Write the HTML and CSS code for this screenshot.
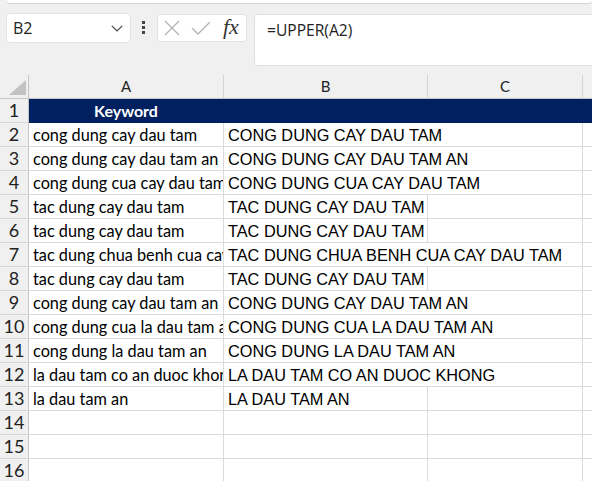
FILE: index.html
```html
<!DOCTYPE html>
<html>
<head>
<meta charset="utf-8">
<link rel="stylesheet" href="styles.css">
</head>
<body>
<div class="app">
  <div class="ribbon-edge"></div>
  <div class="formula-row">
    <div class="namebox">
      <span class="ref">B2</span>
      <svg class="chev" width="12" height="7" viewBox="0 0 12 7"><path d="M0.8 0.8 L6 6 L11.2 0.8" fill="none" stroke="#444" stroke-width="1.2"/></svg>
    </div>
    <div class="grip"><i></i><i></i><i></i></div>
    <div class="fbtns">
      <svg width="16" height="16" viewBox="0 0 16 16"><path d="M1 1 L15 15 M15 1 L1 15" stroke="#b4b4b4" stroke-width="1.4" fill="none"/></svg>
      <svg width="20" height="14" viewBox="0 0 20 14"><path d="M1 7 L7 13 L19 1" stroke="#b4b4b4" stroke-width="1.4" fill="none"/></svg>
      <span class="fx">fx</span>
    </div>
    <div class="fbar">=UPPER(A2)</div>
  </div>
  <div class="sheet">
    <div class="row colhdr">
      <div class="corner"><span class="tri"></span></div>
      <div class="ch">A</div>
      <div class="ch">B</div>
      <div class="ch">C</div>
      <div class="ch last"></div>
    </div>
    <div class="row head">
      <div class="rh">1</div>
      <div class="c a key">Keyword</div>
      <div class="c nv"></div>
      <div class="c nv"></div>
      <div class="c nv last"></div>
    </div>
    <div class="row">
      <div class="rh">2</div>
      <div class="c a">cong dung cay dau tam</div>
      <div class="c b span">CONG DUNG CAY DAU TAM</div>
      <div class="c last"></div>
    </div>
    <div class="row">
      <div class="rh">3</div>
      <div class="c a">cong dung cay dau tam an</div>
      <div class="c b span">CONG DUNG CAY DAU TAM AN</div>
      <div class="c last"></div>
    </div>
    <div class="row">
      <div class="rh">4</div>
      <div class="c a">cong dung cua cay dau tam</div>
      <div class="c b span">CONG DUNG CUA CAY DAU TAM</div>
      <div class="c last"></div>
    </div>
    <div class="row">
      <div class="rh">5</div>
      <div class="c a">tac dung cay dau tam</div>
      <div class="c b">TAC DUNG CAY DAU TAM</div>
      <div class="c"></div>
      <div class="c last"></div>
    </div>
    <div class="row">
      <div class="rh">6</div>
      <div class="c a">tac dung cay dau tam</div>
      <div class="c b">TAC DUNG CAY DAU TAM</div>
      <div class="c"></div>
      <div class="c last"></div>
    </div>
    <div class="row">
      <div class="rh">7</div>
      <div class="c a">tac dung chua benh cua cay dau tam</div>
      <div class="c b span">TAC DUNG CHUA BENH CUA CAY DAU TAM</div>
      <div class="c last"></div>
    </div>
    <div class="row">
      <div class="rh">8</div>
      <div class="c a">tac dung cay dau tam</div>
      <div class="c b">TAC DUNG CAY DAU TAM</div>
      <div class="c"></div>
      <div class="c last"></div>
    </div>
    <div class="row">
      <div class="rh">9</div>
      <div class="c a">cong dung cay dau tam an</div>
      <div class="c b span">CONG DUNG CAY DAU TAM AN</div>
      <div class="c last"></div>
    </div>
    <div class="row">
      <div class="rh">10</div>
      <div class="c a">cong dung cua la dau tam an</div>
      <div class="c b span">CONG DUNG CUA LA DAU TAM AN</div>
      <div class="c last"></div>
    </div>
    <div class="row">
      <div class="rh">11</div>
      <div class="c a">cong dung la dau tam an</div>
      <div class="c b span">CONG DUNG LA DAU TAM AN</div>
      <div class="c last"></div>
    </div>
    <div class="row">
      <div class="rh">12</div>
      <div class="c a">la dau tam co an duoc khong</div>
      <div class="c b span">LA DAU TAM CO AN DUOC KHONG</div>
      <div class="c last"></div>
    </div>
    <div class="row">
      <div class="rh">13</div>
      <div class="c a">la dau tam an</div>
      <div class="c b">LA DAU TAM AN</div>
      <div class="c"></div>
      <div class="c last"></div>
    </div>
    <div class="row">
      <div class="rh">14</div>
      <div class="c a"></div>
      <div class="c b"></div>
      <div class="c"></div>
      <div class="c last"></div>
    </div>
    <div class="row">
      <div class="rh">15</div>
      <div class="c a"></div>
      <div class="c b"></div>
      <div class="c"></div>
      <div class="c last"></div>
    </div>
    <div class="row">
      <div class="rh">16</div>
      <div class="c a"></div>
      <div class="c b"></div>
      <div class="c"></div>
      <div class="c last"></div>
    </div>
  </div>
</div>
</body>
</html>
```

FILE: styles.css
```css
* { box-sizing: border-box; }
html, body { margin: 0; padding: 0; }
body {
  width: 592px;
  height: 481px;
  overflow: hidden;
  background: #f0f0f0;
  font-family: "Open Sans", "Noto Sans", sans-serif;
}
.app { width: 592px; height: 481px; overflow: hidden; }

.ribbon-edge {
  height: 3px;
  margin-left: 7px;
  background: #fff;
  border-radius: 0 0 6px 6px;
  box-shadow: 0 1px 1px rgba(0,0,0,0.12);
}

.formula-row {
  height: 72px;
  display: flex;
  align-items: flex-start;
  padding-top: 10px;
  padding-left: 6px;
}
.namebox {
  width: 125px;
  height: 30px;
  background: #fff;
  border: 1px solid #e3e3e3;
  border-radius: 4px;
  display: flex;
  align-items: center;
  justify-content: space-between;
  padding: 0 6px 0 6px;
}
.ref { font-size: 16px; color: #222; }
.chev { margin-right: 1px; margin-top: 1px; }

.grip {
  width: 4px;
  margin: 8px 11px 0 11px;
  display: flex;
  flex-direction: column;
  gap: 2px;
}
.grip i { display: block; width: 3px; height: 3px; background: #444; }

.fbtns {
  width: 90px;
  height: 28px;
  margin-top: 1px;
  background: #fff;
  border: 1px solid #e3e3e3;
  border-radius: 4px;
  display: flex;
  align-items: center;
  padding-left: 6px;
  gap: 11px;
}
.fx {
  font-family: "Liberation Serif", serif;
  font-style: italic;
  font-size: 22px;
  color: #333;
  margin-left: 1px;
  margin-top: -2px;
}

.fbar {
  flex: 1;
  height: 52px;
  margin-top: 1px;
  margin-left: 7px;
  margin-right: -6px;
  background: #fff;
  border: 1px solid #e0e0e0;
  border-radius: 4px;
  font-size: 15.6px;
  color: #222;
  padding: 4px 0 0 12px;
}

.sheet { background: #fff; }
.row {
  display: grid;
  grid-template-columns: 29px 195px 204px 155px 1fr;
  height: 24px;
}
.rh, .ch, .corner {
  background: #f0f0f0;
  border-right: 1px solid #c6c6c6;
  border-bottom: 1px solid #d6d6d6;
  color: #222;
  font-family: "Lato", "Open Sans", sans-serif;
}
.rh {
  font-size: 18px;
  line-height: 23px;
  text-align: center;
}
.ch {
  font-size: 15px;
  line-height: 23px;
  text-align: center;
  border-right-color: #d4d4d4;
  border-bottom-color: #c6c6c6;
}
.ch.last { border-right: none; }
.corner {
  position: relative;
  border-bottom-color: #c6c6c6;
}
.tri {
  position: absolute;
  left: 9px;
  top: 5px;
  width: 0;
  height: 0;
  border-left: 17px solid transparent;
  border-bottom: 15px solid #c2c2c2;
}

.c {
  border-right: 1px solid #dadada;
  border-bottom: 1px solid #dadada;
  white-space: nowrap;
  overflow: hidden;
  line-height: 23px;
  padding-left: 4px;
  color: #000;
}
.c.last { border-right: none; }
.a {
  font-family: "Lato", "Open Sans", sans-serif;
  font-size: 16.3px;
  padding-top: 1px;
  line-height: 22px;
}
.b {
  font-family: "Liberation Sans", Arial, sans-serif;
  font-size: 16.3px;
  padding-top: 1px;
  line-height: 22px;
}
.span { grid-column: span 2; overflow: visible; }

.head .c {
  background: #002060;
  border-color: #002060;
}
.key {
  color: #fff;
  font-weight: bold;
  text-align: center;
  padding-left: 0;
  padding-top: 0;
  line-height: 23px;
  font-size: 16px;
}
```
